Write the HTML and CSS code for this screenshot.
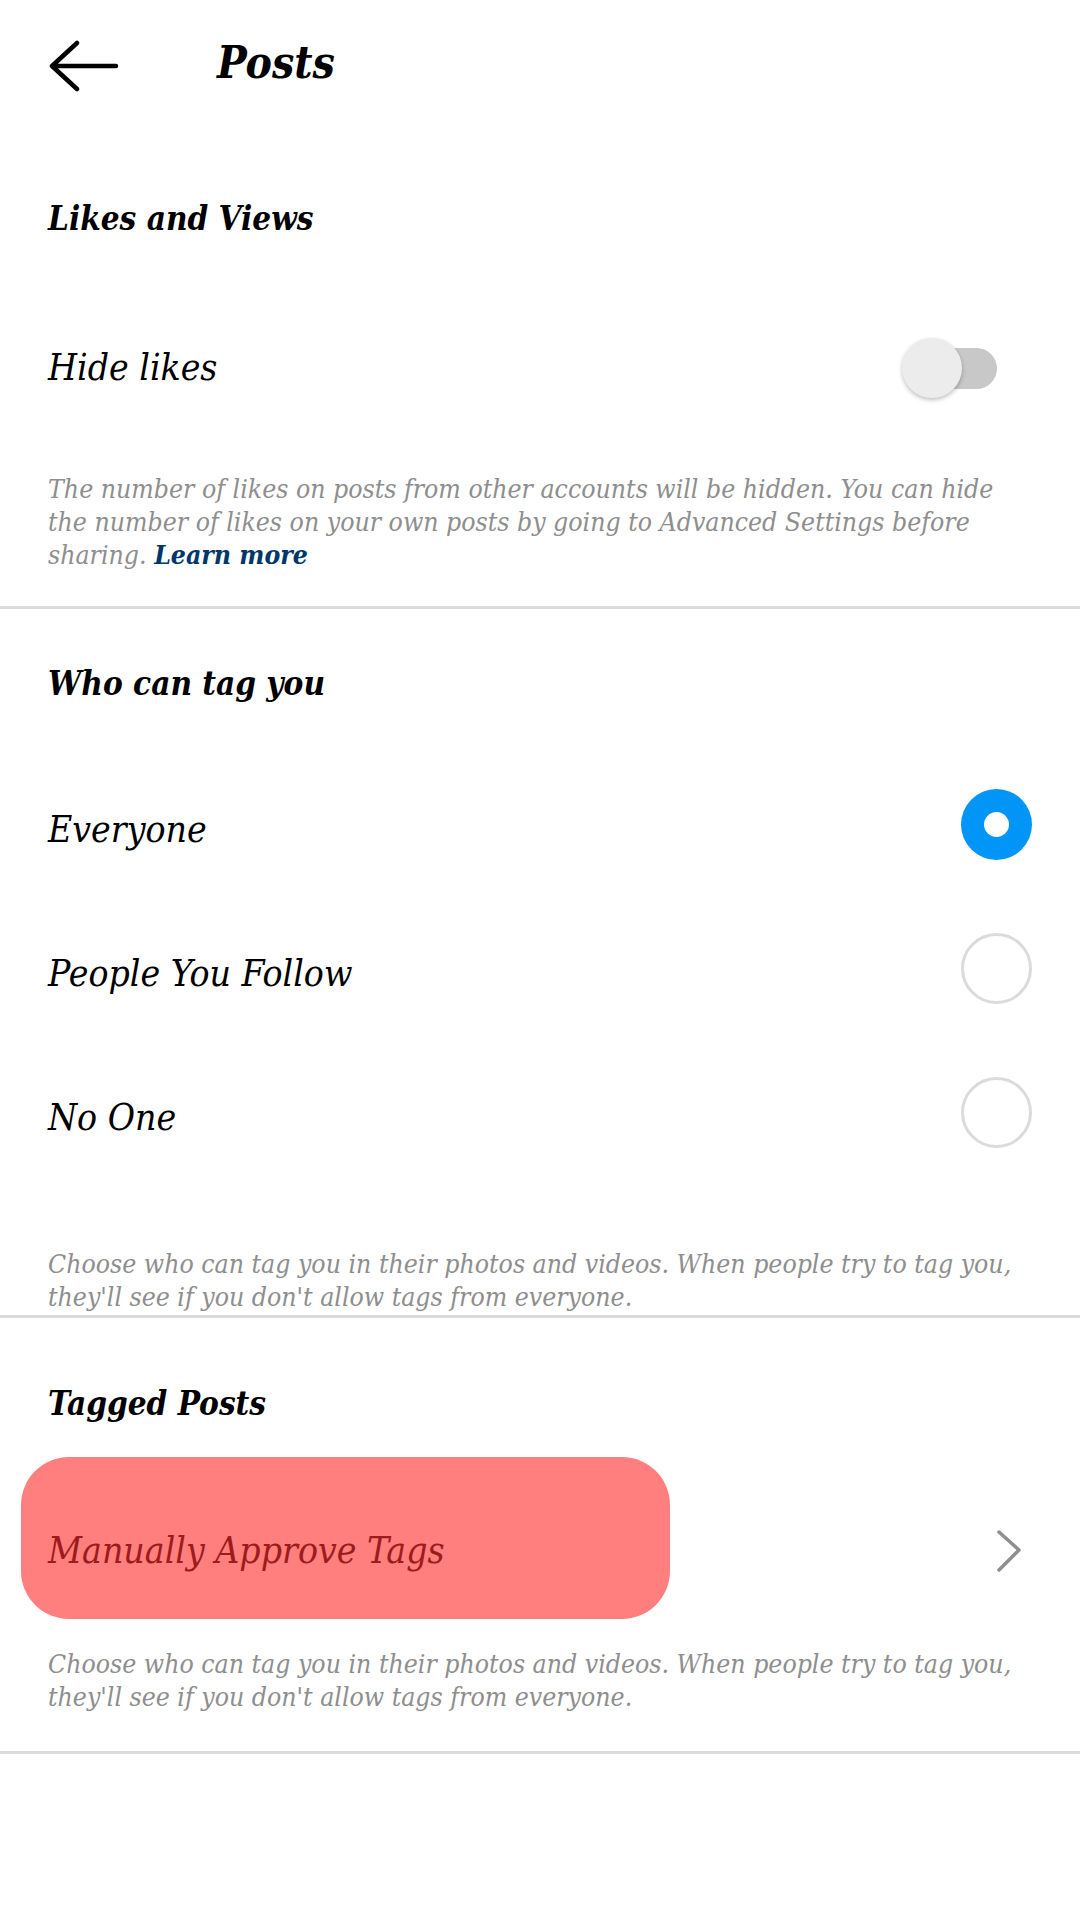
FILE: index.html
```html
<!DOCTYPE html>
<html lang="en">
<head>
    <meta charset="UTF-8">
    <meta name="viewport" content="width=device-width, initial-scale=1.0">
    <title>Posts</title>
    <link rel="stylesheet" href="styles.css">
</head>
<body>
    <header class="topbar">
        <svg class="back" width="72" height="52" viewBox="0 0 72 52">
            <path d="M29 3 L4 26 L29 49 M4 26 L68 26" fill="none" stroke="#000" stroke-width="4.5" stroke-linecap="round" stroke-linejoin="round"/>
        </svg>
        <h1 class="title">Posts</h1>
    </header>

    <section class="group">
        <h2 class="group-title">Likes and Views</h2>
        <div class="row row-switch">
            <span class="label">Hide likes</span>
            <span class="switch"><span class="track"></span><span class="knob"></span></span>
        </div>
        <p class="note note-first">The number of likes on posts from other accounts will be hidden. You can hide the number of likes on your own posts by going to Advanced Settings before sharing. <a class="link" href="#">Learn more</a></p>
    </section>

    <section class="group group-tags">
        <h2 class="group-title">Who can tag you</h2>
        <div class="options">
            <div class="row row-radio">
                <span class="label">Everyone</span>
                <span class="radio checked"><span class="dot"></span></span>
            </div>
            <div class="row row-radio">
                <span class="label">People You Follow</span>
                <span class="radio"></span>
            </div>
            <div class="row row-radio">
                <span class="label">No One</span>
                <span class="radio"></span>
            </div>
        </div>
        <p class="note note-tags">Choose who can tag you in their photos and videos. When people try to tag you, they'll see if you don't allow tags from everyone.</p>
    </section>

    <section class="group group-tagged">
        <h2 class="group-title">Tagged Posts</h2>
        <div class="row row-link">
            <span class="label">Manually Approve Tags</span>
            <svg class="chevron" width="30" height="46" viewBox="0 0 30 46">
                <path d="M5 4 L25 22 L5 42" fill="none" stroke="#8e8e8e" stroke-width="3.5" stroke-linecap="round" stroke-linejoin="round"/>
            </svg>
        </div>
        <p class="note note-tagged">Choose who can tag you in their photos and videos. When people try to tag you, they'll see if you don't allow tags from everyone.</p>
    </section>
</body>
</html>
```

FILE: styles.css
```css
body {
    margin: 0;
    background: #ffffff;
    color: #000;
    font-family: "DejaVu Serif Condensed", "DejaVu Serif", serif;
    font-stretch: condensed;
    font-style: italic;
}

.topbar {
    height: 132px;
    display: flex;
    align-items: center;
    padding-left: 48px;
}

.back {
    display: block;
    flex: none;
}

.title {
    margin: 0 0 0 97px;
    padding-bottom: 6px;
    font-size: 44px;
    line-height: 60px;
    font-weight: bold;
}

.group {
    padding: 0 48px;
    border-bottom: 3px solid #dbdbdb;
}

.group-title {
    margin: 0;
    padding-top: 57px;
    font-size: 33px;
    line-height: 60px;
    font-weight: bold;
}

.group-tags .group-title {
    padding-top: 45px;
}

.group-tagged .group-title {
    padding-top: 56px;
}

.row {
    display: flex;
    align-items: center;
    justify-content: space-between;
}

.label {
    font-size: 37px;
    line-height: 50px;
}

.row-switch {
    height: 110px;
    margin-top: 64px;
}

.switch {
    position: relative;
    width: 95px;
    height: 60px;
    margin-right: 35px;
}

.track {
    position: absolute;
    right: 0;
    top: 10px;
    width: 86px;
    height: 41px;
    border-radius: 21px;
    background: #c8c8c8;
}

.knob {
    position: absolute;
    left: 0;
    top: 0;
    width: 60px;
    height: 60px;
    border-radius: 50%;
    background: #ececec;
    box-shadow: 0 2px 4px rgba(0, 0, 0, 0.25);
}

.options {
    margin-top: 38px;
}

.row-radio {
    height: 144px;
}

.row-radio .label {
    padding-top: 12px;
}

.radio {
    width: 71px;
    height: 71px;
    box-sizing: border-box;
    border: 3px solid #dbdbdb;
    border-radius: 50%;
    display: flex;
    align-items: center;
    justify-content: center;
}

.radio.checked {
    border: none;
    background: #0095f6;
}

.dot {
    width: 25px;
    height: 25px;
    border-radius: 50%;
    background: #fff;
}

.row-link {
    position: relative;
    height: 162px;
    margin-top: 23px;
    padding-top: 25px;
    box-sizing: border-box;
}

/* highlight drawn over the row */
.row-link::before {
    content: "";
    position: absolute;
    left: -27px;
    top: 0;
    width: 649px;
    height: 162px;
    border-radius: 48px;
    background: #ff7f7f;
}

.row-link .label {
    position: relative;
    color: #9e1b1b;
}

.chevron {
    display: block;
    margin-right: 8px;
}

.note {
    margin: 0;
    font-size: 26.4px;
    line-height: 33px;
    color: #8e8e8e;
}

.note-first {
    margin-top: 49px;
    padding-bottom: 35px;
}

.note-tags {
    margin-top: 63px;
    padding-bottom: 2px;
}

.note-tagged {
    margin-top: 28px;
    padding-bottom: 38px;
}

.link {
    color: #00376b;
    font-weight: bold;
    text-decoration: none;
}
```
